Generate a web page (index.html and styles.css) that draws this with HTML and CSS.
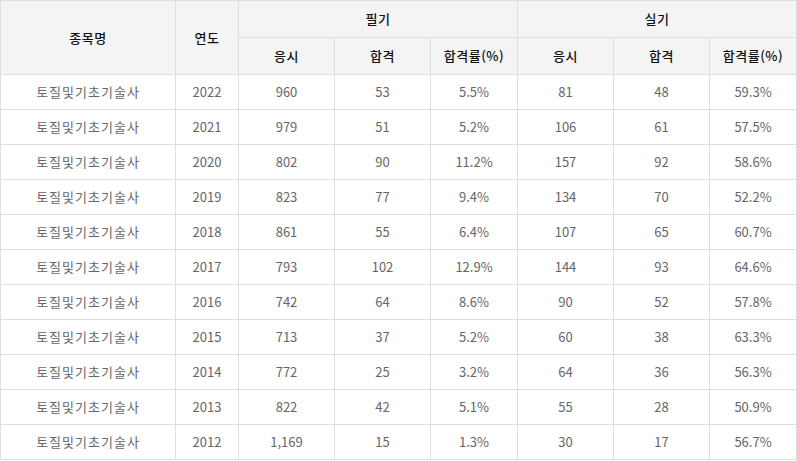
FILE: index.html
```html
<!DOCTYPE html>
<html lang="ko">
<head>
<meta charset="utf-8">
<link rel="stylesheet" href="styles.css">
</head>
<body>
<table class="stats">
  <colgroup>
    <col class="c-name"><col class="c-year">
    <col class="c-num"><col class="c-num"><col class="c-rate">
    <col class="c-num"><col class="c-num"><col class="c-rate">
  </colgroup>
  <thead>
    <tr class="h1">
      <th rowspan="2">종목명</th>
      <th rowspan="2">연도</th>
      <th colspan="3">필기</th>
      <th colspan="3">실기</th>
    </tr>
    <tr class="h2">
      <th>응시</th><th>합격</th><th>합격률(%)</th>
      <th>응시</th><th>합격</th><th>합격률(%)</th>
    </tr>
  </thead>
  <tbody>
    <tr><td>토질및기초기술사</td><td>2022</td><td>960</td><td>53</td><td>5.5%</td><td>81</td><td>48</td><td>59.3%</td></tr>
    <tr><td>토질및기초기술사</td><td>2021</td><td>979</td><td>51</td><td>5.2%</td><td>106</td><td>61</td><td>57.5%</td></tr>
    <tr><td>토질및기초기술사</td><td>2020</td><td>802</td><td>90</td><td>11.2%</td><td>157</td><td>92</td><td>58.6%</td></tr>
    <tr><td>토질및기초기술사</td><td>2019</td><td>823</td><td>77</td><td>9.4%</td><td>134</td><td>70</td><td>52.2%</td></tr>
    <tr><td>토질및기초기술사</td><td>2018</td><td>861</td><td>55</td><td>6.4%</td><td>107</td><td>65</td><td>60.7%</td></tr>
    <tr><td>토질및기초기술사</td><td>2017</td><td>793</td><td>102</td><td>12.9%</td><td>144</td><td>93</td><td>64.6%</td></tr>
    <tr><td>토질및기초기술사</td><td>2016</td><td>742</td><td>64</td><td>8.6%</td><td>90</td><td>52</td><td>57.8%</td></tr>
    <tr><td>토질및기초기술사</td><td>2015</td><td>713</td><td>37</td><td>5.2%</td><td>60</td><td>38</td><td>63.3%</td></tr>
    <tr><td>토질및기초기술사</td><td>2014</td><td>772</td><td>25</td><td>3.2%</td><td>64</td><td>36</td><td>56.3%</td></tr>
    <tr><td>토질및기초기술사</td><td>2013</td><td>822</td><td>42</td><td>5.1%</td><td>55</td><td>28</td><td>50.9%</td></tr>
    <tr><td>토질및기초기술사</td><td>2012</td><td>1,169</td><td>15</td><td>1.3%</td><td>30</td><td>17</td><td>56.7%</td></tr>
  </tbody>
</table>
</body>
</html>
```

FILE: styles.css
```css
html, body {
  margin: 0;
  padding: 0;
  background: #fff;
}

.stats {
  border-collapse: collapse;
  table-layout: fixed;
  width: 797px;
  font-family: "Noto Sans CJK KR", "Noto Sans", sans-serif;
  font-size: 13px;
}

.c-name { width: 175px; }
.c-year { width: 63px; }
.c-num { width: 96px; }
.c-rate { width: 87px; }

.stats th,
.stats td {
  border: 1px solid #dedede;
  text-align: center;
  vertical-align: middle;
  padding: 0;
  line-height: 18px;
}

.stats th {
  background: #f4f4f4;
  color: #111;
  font-weight: 500;
  height: 36px;
  letter-spacing: 0.5px;
}

.stats td {
  color: #666;
  height: 34px;
}

.stats td:first-child {
  letter-spacing: 1px;
}
```
